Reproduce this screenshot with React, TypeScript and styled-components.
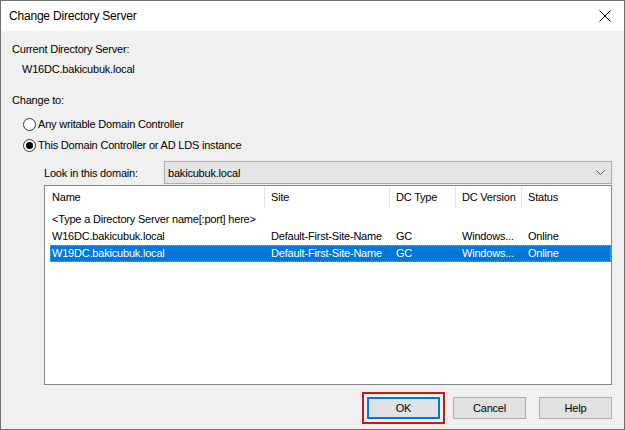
import styled, { createGlobalStyle } from 'styled-components';
import { useState } from 'react';

const GlobalStyle = createGlobalStyle`
  html, body {
    margin: 0;
    padding: 0;
    background: #f0f0f0;
  }
  * {
    box-sizing: border-box;
  }
`;

const FONT = `"Liberation Sans", Arial, sans-serif`;

const Window = styled.div`
  width: 625px;
  height: 430px;
  border: 1px solid #6f6f6f;
  display: flex;
  flex-direction: column;
  font-family: ${FONT};
  font-size: 11px;
  letter-spacing: -0.2px;
  color: #000;
  overflow: hidden;
`;

const TitleBar = styled.div`
  height: 30px;
  background: #fff;
  display: flex;
  align-items: center;
  justify-content: space-between;
  padding-left: 8px;
`;

const Title = styled.span`
  font-size: 12px;
  letter-spacing: -0.2px;
`;

const CloseButton = styled.button`
  width: 46px;
  height: 30px;
  border: none;
  background: transparent;
  display: flex;
  align-items: center;
  justify-content: center;
  padding: 0 0 0 8px;
`;

const Body = styled.div`
  flex: 1;
  background: #f0f0f0;
  padding: 10px 12px 0 11px;
  display: flex;
  flex-direction: column;
`;

const Label = styled.div<{ $indent?: number; $gap?: number }>`
  height: 16px;
  line-height: 16px;
  margin-left: ${({ $indent }) => $indent ?? 0}px;
  margin-top: ${({ $gap }) => $gap ?? 0}px;
  white-space: nowrap;
`;

const RadioRow = styled.label<{ $gap: number }>`
  display: flex;
  align-items: center;
  gap: 2px;
  height: 16px;
  margin-left: 11px;
  margin-top: ${({ $gap }) => $gap}px;
  cursor: default;
`;

const RadioCircle = styled.span<{ $checked: boolean }>`
  width: 13px;
  height: 13px;
  border-radius: 50%;
  border: 1px solid #333;
  background: #fff;
  display: flex;
  align-items: center;
  justify-content: center;

  &::after {
    content: '';
    width: 7px;
    height: 7px;
    border-radius: 50%;
    background: ${({ $checked }) => ($checked ? '#000' : 'transparent')};
  }
`;

const DomainRow = styled.div`
  display: flex;
  align-items: center;
  margin-top: 8px;
  margin-left: 32px;
  height: 23px;
`;

const DomainLabel = styled.span`
  width: 120px;
  white-space: nowrap;
`;

const Combo = styled.div`
  flex: 1;
  height: 23px;
  border: 1px solid #adadad;
  background: #e5e5e5;
  display: flex;
  align-items: center;
  justify-content: space-between;
  padding: 0 6px 0 3px;
`;

const ListBox = styled.div`
  margin-top: 1px;
  margin-left: 32px;
  height: 200px;
  border: 1px solid #828790;
  background: #fff;
`;

const COLUMNS = '220px 125px 66px 66px 1fr';

const Header = styled.div`
  display: grid;
  grid-template-columns: ${COLUMNS};
  height: 22px;
  margin-bottom: 3px;
`;

const HeaderCell = styled.div<{ $first?: boolean; $last?: boolean }>`
  line-height: 22px;
  padding-left: ${({ $first }) => ($first ? 7 : 6)}px;
  border-right: ${({ $last }) => ($last ? 'none' : '1px solid #e5e5e5')};
  white-space: nowrap;
`;

const Row = styled.div<{ $selected?: boolean }>`
  display: grid;
  grid-template-columns: 215px 125px 66px 66px 1fr;
  height: 17px;
  line-height: 15px;
  margin-left: 5px;
  background: ${({ $selected }) => ($selected ? '#0078d7' : 'transparent')};
  color: ${({ $selected }) => ($selected ? '#fff' : '#000')};
  outline: ${({ $selected }) => ($selected ? '1px dotted #7aa7d8' : 'none')};
  outline-offset: -1px;
`;

const Cell = styled.div<{ $first?: boolean; $span?: boolean }>`
  padding: 1px 0 0 ${({ $first }) => ($first ? 2 : 6)}px;
  white-space: nowrap;
  grid-column: ${({ $span }) => ($span ? '1 / -1' : 'auto')};
`;

const Footer = styled.div`
  display: flex;
  justify-content: flex-end;
  gap: 13px;
  margin-top: 12px;
`;

const Highlight = styled.div`
  border: 2px solid #d0141c;
  padding: 3px;
  margin: -5px -5px -5px 0;
  display: flex;
`;

const Button = styled.button<{ $default?: boolean }>`
  width: 73px;
  height: 22px;
  font-family: ${FONT};
  font-size: 11px;
  letter-spacing: -0.2px;
  color: #000;
  background: #e1e1e1;
  border: ${({ $default }) => ($default ? '2px solid #0078d7' : '1px solid #adadad')};
  padding: 0;
`;

const servers = [
  { name: 'W16DC.bakicubuk.local', site: 'Default-First-Site-Name', type: 'GC', version: 'Windows...', status: 'Online' },
  { name: 'W19DC.bakicubuk.local', site: 'Default-First-Site-Name', type: 'GC', version: 'Windows...', status: 'Online' },
];

export default function App() {
  const [mode, setMode] = useState<'any' | 'this'>('this');
  const [selected, setSelected] = useState(1);

  return (
    <>
      <GlobalStyle />
      <Window>
        <TitleBar>
          <Title>Change Directory Server</Title>
          <CloseButton aria-label="Close">
            <svg width="12" height="12" viewBox="0 0 12 12">
              <path d="M0.5 0.5 L11.5 11.5 M11.5 0.5 L0.5 11.5" stroke="#000" strokeWidth="1" />
            </svg>
          </CloseButton>
        </TitleBar>
        <Body>
          <Label>Current Directory Server:</Label>
          <Label $indent={10} $gap={4}>W16DC.bakicubuk.local</Label>
          <Label $gap={15}>Change to:</Label>
          <RadioRow $gap={8} onClick={() => setMode('any')}>
            <RadioCircle $checked={mode === 'any'} />
            Any writable Domain Controller
          </RadioRow>
          <RadioRow $gap={5} onClick={() => setMode('this')}>
            <RadioCircle $checked={mode === 'this'} />
            This Domain Controller or AD LDS instance
          </RadioRow>
          <DomainRow>
            <DomainLabel>Look in this domain:</DomainLabel>
            <Combo>
              <span>bakicubuk.local</span>
              <svg width="9" height="5" viewBox="0 0 9 5">
                <path d="M0.5 0.5 L4.5 4.5 L8.5 0.5" stroke="#555" strokeWidth="1" fill="none" />
              </svg>
            </Combo>
          </DomainRow>
          <ListBox>
            <Header>
              <HeaderCell $first>Name</HeaderCell>
              <HeaderCell>Site</HeaderCell>
              <HeaderCell>DC Type</HeaderCell>
              <HeaderCell>DC Version</HeaderCell>
              <HeaderCell $last>Status</HeaderCell>
            </Header>
            <Row>
              <Cell $first $span>&lt;Type a Directory Server name[:port] here&gt;</Cell>
            </Row>
            {servers.map((s, i) => (
              <Row key={s.name} $selected={selected === i} onClick={() => setSelected(i)}>
                <Cell $first>{s.name}</Cell>
                <Cell>{s.site}</Cell>
                <Cell>{s.type}</Cell>
                <Cell>{s.version}</Cell>
                <Cell>{s.status}</Cell>
              </Row>
            ))}
          </ListBox>
          <Footer>
            <Highlight>
              <Button $default>OK</Button>
            </Highlight>
            <Button>Cancel</Button>
            <Button>Help</Button>
          </Footer>
        </Body>
      </Window>
    </>
  );
}
